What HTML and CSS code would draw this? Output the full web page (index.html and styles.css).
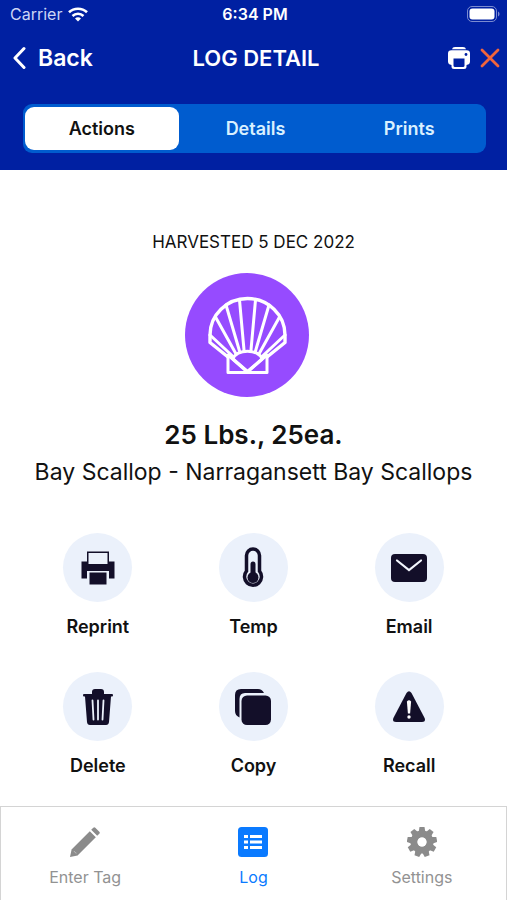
FILE: index.html
```html
<!DOCTYPE html>
<html lang="en">
<head>
<meta charset="utf-8">
<meta name="viewport" content="width=device-width, initial-scale=1">
<title>Log Detail</title>
<link rel="stylesheet" href="styles.css">
</head>
<body>
<div class="app">
  <header class="header">
    <div class="status">
      <div class="carrier">
        <span>Carrier</span>
        <svg width="20" height="15" viewBox="0 0 20 15" aria-hidden="true"><g fill="none" stroke="#fff" stroke-width="2.6"><path d="M1 5.3a13 13 0 0 1 18 0"/><path d="M4.5 9a8 8 0 0 1 11 0"/></g><path d="M10 14.6l-3-3a4.2 4.2 0 0 1 6 0z" fill="#fff"/></svg>
      </div>
      <span class="time">6:34 PM</span>
      <svg class="battery" width="33" height="16" viewBox="0 0 33 16" aria-hidden="true"><rect x=".5" y=".5" width="29" height="15" rx="4.5" fill="none" stroke="#7b8bd0"/><rect x="2.5" y="2.5" width="25" height="11" rx="3" fill="#fff"/><path d="M31 5.5c2 .8 2 4.200 0 5z" fill="#7b8bd0"/></svg>
    </div>
    <div class="nav">
      <button class="back" type="button">
        <svg width="14" height="24" viewBox="0 0 14 24" aria-hidden="true"><path d="M12 2.500L3 12l9 9.500" fill="none" stroke="#fff" stroke-width="3" stroke-linecap="round" stroke-linejoin="round"/></svg>
        <span>Back</span>
      </button>
      <h1 class="nav-title">LOG DETAIL</h1>
      <div class="nav-tools">
        <button type="button" aria-label="Print">
          <svg width="22" height="22" viewBox="0 0 22 22" aria-hidden="true"><path d="M4 2.200Q4.500 0 7 0h8q2.500 0 3 2.200z" fill="#fff"/><path d="M3.500 3.200h15Q22 3.200 22 6.500v8q0 3-3.500 3.500v1.500Q18.500 22 16 22H6q-2.500 0-2.500-2.500V18Q0 17.500 0 14.500v-8Q0 3.200 3.500 3.200z" fill="#fff"/><path d="M5.500 11.500h11v7q0 1.500-1.500 1.500H7q-1.500 0-1.500-1.500z" fill="#0020a2"/><circle cx="18" cy="7.500" r="1.400" fill="#0020a2"/></svg>
        </button>
        <button type="button" aria-label="Close">
          <svg width="20" height="20" viewBox="0 0 20 20" aria-hidden="true"><path d="M2 2l16 16M18 2L2 18" fill="none" stroke="#f0643c" stroke-width="2.800" stroke-linecap="round"/></svg>
        </button>
      </div>
    </div>
    <div class="segments">
      <button class="segment selected" type="button">Actions</button>
      <button class="segment" type="button">Details</button>
      <button class="segment" type="button">Prints</button>
    </div>
  </header>

  <main class="content">
    <p class="harvested">HARVESTED 5 DEC 2022</p>
    <div class="species">
      <svg width="124" height="124" viewBox="0 0 124 124" aria-hidden="true">
        <circle cx="62" cy="62" r="62" fill="#964bff"/>
        <g fill="none" stroke="#fff" stroke-width="3" stroke-linejoin="round" stroke-linecap="round">
          <path d="M59 77L54.500 27M66 77L70.500 27M54.500 78L41 32M70.500 78L84 32M50.500 80L30.500 44M74.500 80L94.500 44M47.500 83L25 62M77.500 83L100 62"/>
          <path d="M43 84L25 69.500v-7.500a37.500 36.500 0 0 1 75 0v7.500L82 84" stroke-width="3.400"/>
          <path d="M48 86C51 75.500 74 75.500 77 86L62.500 98.500z" fill="#964bff"/>
          <path d="M43 84v15.500h39V84"/>
          <path d="M43 82l19.500 17L82 82"/>
        </g>
      </svg>
    </div>
    <h2 class="quantity">25 Lbs., 25ea.</h2>
    <p class="product">Bay Scallop - Narragansett Bay Scallops</p>

    <div class="actions">
      <button class="action" type="button">
        <span class="disc"><svg width="34" height="34" viewBox="0 0 34 34" aria-hidden="true"><path d="M6 .5h22v10h5.500v17H28V20H6v7.500H.5v-17H6z" fill="#130f29"/><path d="M7.500 2h19v11h-19z" fill="#ebf1fb"/><path d="M8.500 21.500h17v12h-17z" fill="#130f29"/></svg></span>
        <span>Reprint</span>
      </button>
      <button class="action" type="button">
        <span class="disc"><svg width="22" height="42" viewBox="0 0 22 42" aria-hidden="true"><path d="M4.500 8.500a6.500 6.500 0 0 1 13 0v15.700a8.500 8.500 0 1 1-13 0z" fill="#ebf1fb" stroke="#130f29" stroke-width="3.500"/><path d="M11 17v13" stroke="#130f29" stroke-width="5" stroke-linecap="round"/><circle cx="11" cy="30.500" r="5.500" fill="#130f29"/></svg></span>
        <span>Temp</span>
      </button>
      <button class="action" type="button">
        <span class="disc"><svg width="36" height="28" viewBox="0 0 36 28" aria-hidden="true"><rect width="36" height="28" rx="4" fill="#130f29"/><path d="M6 6.500l12 9.500L30 6.500" fill="none" stroke="#f3f6fd" stroke-width="2.200" stroke-linecap="round"/></svg></span>
        <span>Email</span>
      </button>
      <button class="action" type="button">
        <span class="disc"><svg width="30" height="36" viewBox="0 0 30 36" aria-hidden="true"><path d="M9 5V3q0-3 3-3h6q3 0 3 3v2h8q1 0 1 1.200T29 7.400h-1L26 33q-.3 3-3 3H7q-2.700 0-3-3L2 7.400H1Q0 7.400 0 6.200T1 5z" fill="#130f29"/><path d="M9.500 11.500l1 19M15 11.500v19M20.500 11.500l-1 19" stroke="#ebf1fb" stroke-width="1.800" stroke-linecap="round"/></svg></span>
        <span>Delete</span>
      </button>
      <button class="action" type="button">
        <span class="disc"><svg width="36" height="36" viewBox="0 0 36 36" aria-hidden="true"><path d="M4.500 28.500Q0 26.500 0 22V6Q0 0 6 0h17q4 0 6 4H10q-5.500 0-5.500 6z" fill="#130f29"/><rect x="6.500" y="6.500" width="29.500" height="29.500" rx="5.500" fill="#130f29"/></svg></span>
        <span>Copy</span>
      </button>
      <button class="action" type="button">
        <span class="disc"><svg width="34" height="32" viewBox="0 0 34 32" aria-hidden="true"><path d="M14.500 2q2.500-3.500 5 0L32.600 27q1.400 4-2.600 4H4q-4 0-2.600-4z" fill="#130f29"/><path d="M14.900 10.500q2.100-2.500 4.200 0l-1 12h-2.200z" fill="#fff"/><circle cx="17" cy="26" r="1.700" fill="#fff"/></svg></span>
        <span>Recall</span>
      </button>
    </div>
  </main>

  <nav class="tabs">
    <a class="tab" href="#enter-tag">
      <svg width="30" height="30" viewBox="0 0 30 30" aria-hidden="true"><path d="M0 30l1.600-7.600L19.800 4.200l6 6L7.600 28.400z" fill="#8b8b8b"/><path d="M21.200 2.800L23.300.7q1-1 2 0l4 4q1 1 0 2l-2.100 2.100z" fill="#8b8b8b"/><path d="M4 24l1 1.500 1.500.7" fill="none" stroke="#c4c4c4" stroke-width=".8"/></svg>
      <span>Enter Tag</span>
    </a>
    <a class="tab current" href="#log" aria-current="page">
      <svg width="30" height="30" viewBox="0 0 30 30" aria-hidden="true"><rect width="30" height="30" rx="3.500" fill="#0a7aff"/><path d="M12 9.500h12M12 15h12M12 20.500h12M6 9.500h4M6 15h4M6 20.500h4" stroke="#fff" stroke-width="2.800"/></svg>
      <span>Log</span>
    </a>
    <a class="tab" href="#settings">
      <svg width="30" height="30" viewBox="-15 -15 30 30" aria-hidden="true"><g fill="#8b8b8b"><path id="tooth" d="M-3.500-9l1-6h5l1 6z"/><use href="#tooth" transform="rotate(40)"/><use href="#tooth" transform="rotate(80)"/><use href="#tooth" transform="rotate(120)"/><use href="#tooth" transform="rotate(160)"/><use href="#tooth" transform="rotate(200)"/><use href="#tooth" transform="rotate(240)"/><use href="#tooth" transform="rotate(280)"/><use href="#tooth" transform="rotate(320)"/></g><circle r="8" fill="none" stroke="#8b8b8b" stroke-width="7"/><circle r="4.500" fill="#fff"/></svg>
      <span>Settings</span>
    </a>
  </nav>
</div>
</body>
</html>
```
FILE: styles.css
```css
* {
  box-sizing: border-box;
}

body {
  margin: 0;
  background: #fff;
  color: #111;
  font-family: Inter, "Liberation Sans", sans-serif;
}

h1,
h2,
p {
  margin: 0;
}

button {
  padding: 0;
  border: 0;
  background: none;
  color: inherit;
  font: inherit;
}

svg {
  display: block;
  flex: none;
}

.app {
  display: flex;
  flex-direction: column;
  min-height: 100vh;
}

.header {
  padding-bottom: 17px;
  background: #0020a2;
  color: #fff;
}

.status,
.nav {
  display: grid;
  grid-template-columns: 1fr auto 1fr;
  align-items: center;
}

.status {
  height: 28px;
  padding: 0 7px 0 10px;
  font-size: 16px;
}

.carrier {
  display: flex;
  align-items: center;
  gap: 6px;
  color: #ccd5f5;
}

.time {
  font-weight: 600;
}

.battery {
  justify-self: end;
}

.nav {
  height: 60px;
  padding: 0 7px 0 12px;
}

.back {
  display: flex;
  align-items: center;
  gap: 12px;
  justify-self: start;
  font-size: 23px;
  font-weight: 600;
}

.nav-title {
  font-size: 22px;
  font-weight: 600;
}

.nav-tools {
  display: flex;
  align-items: center;
  justify-self: end;
  gap: 10px;
}

.segments {
  display: grid;
  grid-template-columns: repeat(3, 1fr);
  height: 49px;
  margin: 16px 21px 0 23px;
  padding: 3px 0 3px 2px;
  border-radius: 9px;
  background: #005ccf;
}

.segment {
  border-radius: 9px;
  color: #d9f0ff;
  font-size: 18px;
  font-weight: 600;
}

.selected {
  background: #fff;
  color: #111;
}

.content {
  flex: 1;
  padding-top: 60px;
  text-align: center;
}

.harvested {
  font-size: 17px;
  line-height: 24px;
}

.species {
  display: flex;
  justify-content: center;
  margin-top: 19px;
  padding-right: 13px;
}

.quantity {
  margin-top: 20px;
  font-size: 26px;
  font-weight: 600;
  line-height: 36px;
}

.product {
  margin-top: 4px;
  font-size: 23px;
  line-height: 30px;
}

.actions {
  display: grid;
  grid-template-columns: repeat(3, 1fr);
  row-gap: 33px;
  margin: 46px 20px 0;
}

.action {
  display: flex;
  flex-direction: column;
  align-items: center;
  gap: 13px;
  font-size: 18px;
  font-weight: 600;
  line-height: 24px;
}

.disc {
  display: grid;
  place-items: center;
  width: 69px;
  height: 69px;
  border-radius: 50%;
  background: #ebf1fb;
}

.tabs {
  display: grid;
  grid-template-columns: repeat(3, 1fr);
  height: 94px;
  border: 1px solid #d4d4d4;
  border-bottom: 0;
}

.tab {
  display: flex;
  flex-direction: column;
  align-items: center;
  gap: 10px;
  padding-top: 20px;
  color: #929292;
  font-size: 16px;
  line-height: 20px;
  text-decoration: none;
}

.current {
  color: #0a7aff;
}
```
